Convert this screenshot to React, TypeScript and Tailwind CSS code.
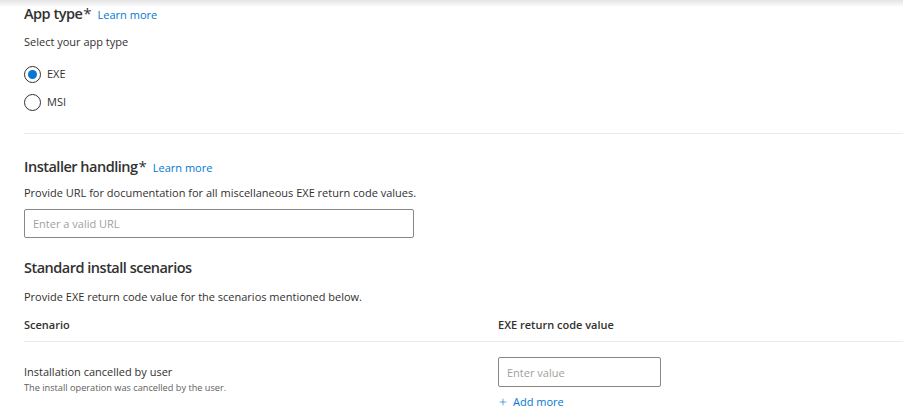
import { Plus } from 'lucide-react';

function Radio({ label, checked }: { label: string; checked?: boolean }) {
  return (
    <label className="flex items-center h-5 gap-[6px] cursor-pointer">
      <span className="w-[17px] h-[17px] rounded-full border border-[#323130] flex items-center justify-center">
        {checked && <span className="w-[9px] h-[9px] rounded-full bg-[#0078d4]" />}
      </span>
      <span className="text-[11px] text-[#323130]">{label}</span>
    </label>
  );
}

function Heading({ title, link }: { title: string; link?: boolean }) {
  return (
    <div className="flex items-baseline h-5 leading-5">
      <h2 className="text-[14.5px] font-semibold tracking-[-0.5px] text-[#323130]">{title}</h2>
      {link && (
        <>
          <span className="text-[15px] text-[#323130] ml-[1px]">*</span>
          <a href="#" className="text-[11px] text-[#0078d4] ml-[6px]">
            Learn more
          </a>
        </>
      )}
    </div>
  );
}

export default function App() {
  return (
    <div className="relative min-h-screen bg-white" style={{ fontFamily: '"Open Sans", "Noto Sans", sans-serif' }}>
      {/* shadow from the header above */}
      <div className="absolute top-0 left-0 right-0 h-[7px] bg-gradient-to-b from-[#e3e3e3] to-white" />

      <main className="relative pl-6 pt-[3px]">
        {/* App type */}
        <Heading title="App type" link />
        <p className="mt-[11px] text-[11px] leading-4 text-[#323130]">Select your app type</p>
        <div className="mt-[14px] flex flex-col gap-[8px]">
          <Radio label="EXE" checked />
          <Radio label="MSI" />
        </div>

        <div className="mt-[21px] border-t border-[#edebe9]" />

        {/* Installer handling */}
        <div className="mt-[22px]">
          <Heading title="Installer handling" link />
        </div>
        <p className="mt-[9px] text-[11px] leading-4 text-[#323130]">
          Provide URL for documentation for all miscellaneous EXE return code values.
        </p>
        <input
          className="mt-[8px] block w-[390px] h-[29px] border border-[#8a8886] rounded-[2px] px-2 text-[11px] text-[#323130] placeholder:text-[#a19f9d] outline-none"
          placeholder="Enter a valid URL"
        />

        {/* Standard install scenarios */}
        <div className="mt-[20px]">
          <Heading title="Standard install scenarios" />
        </div>
        <p className="mt-[11px] text-[11px] leading-4 text-[#323130]">
          Provide EXE return code value for the scenarios mentioned below.
        </p>

        <div className="mt-[12px] grid grid-cols-[474px_1fr] pb-[8px] border-b border-[#edebe9]">
          <div className="text-[11px] leading-4 font-semibold text-[#323130]">Scenario</div>
          <div className="text-[11px] leading-4 font-semibold text-[#323130]">EXE return code value</div>
        </div>

        <div className="grid grid-cols-[474px_1fr] pt-[15px]">
          <div className="pt-[7px]">
            <div className="text-[11px] leading-4 text-[#323130]">Installation cancelled by user</div>
            <div className="mt-[1px] text-[9.2px] leading-[14px] text-[#605e5c]">
              The install operation was cancelled by the user.
            </div>
          </div>
          <div>
            <input
              className="block w-[163px] h-[30px] border border-[#8a8886] rounded-[2px] px-2 text-[11px] text-[#323130] placeholder:text-[#a19f9d] outline-none"
              placeholder="Enter value"
            />
            <button className="mt-[7px] flex items-center gap-[5px] h-4 text-[11px] text-[#0078d4]">
              <Plus className="w-[10px] h-[10px]" strokeWidth={1.5} />
              Add more
            </button>
          </div>
        </div>
      </main>
    </div>
  );
}
